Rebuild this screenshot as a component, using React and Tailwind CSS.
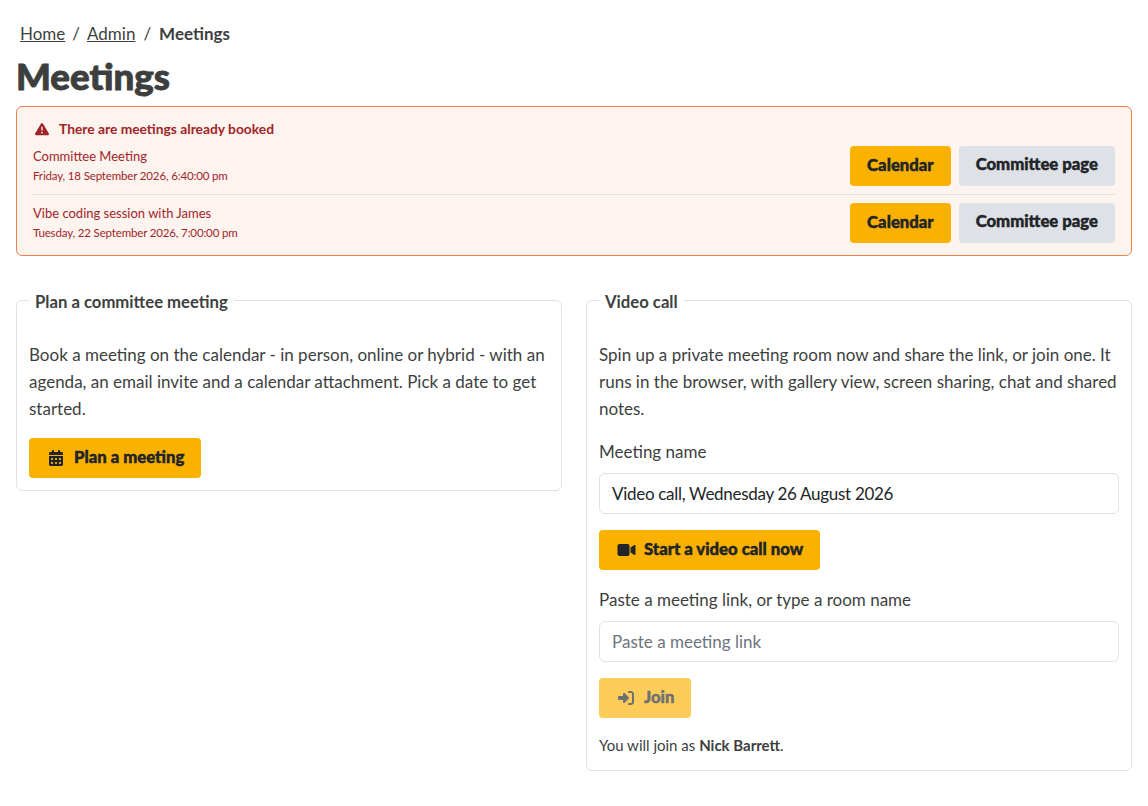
import React from "react";
import { FaCalendarDays, FaVideo, FaRightToBracket, FaTriangleExclamation } from "react-icons/fa6";

const body = "font-['Lato','Noto_Sans',sans-serif]";
const head = "font-['Lato','Roboto',sans-serif] font-black";
const stroke = "[-webkit-text-stroke:0.45px_currentColor]";

function Btn({ children, className = "" }) {
  return (
    <span className={`${head} ${stroke} inline-flex h-10 items-center rounded-[4px] bg-[#fbb100] px-[17px] text-[16.7px] text-[#212529] ${className}`}>
      {children}
    </span>
  );
}

function Icon({ children }) {
  return <span className="flex w-5 justify-center">{children}</span>;
}

function Booking({ title, when }) {
  return (
    <div className="flex items-start justify-between">
      <div>
        <div className="text-[13px] leading-[20px]">{title}</div>
        <div className="mt-px text-[11.5px] leading-[18px] tracking-[-0.15px]">{when}</div>
      </div>
      <div className="flex gap-2">
        <Btn>Calendar</Btn>
        <span className={`${head} ${stroke} inline-flex h-10 items-start rounded-[4px] bg-[#dee2e6] px-[17px] pt-[6px] text-[16.7px] text-[#212529]`}>
          Committee page
        </span>
      </div>
    </div>
  );
}

function Panel({ title, children }) {
  return (
    <fieldset className="rounded-[6px] border border-[#dee2e6] px-3 pb-3 pt-0">
      <legend className="ml-0 px-[6px] pt-[4px] text-[16.7px] font-bold leading-[20px] text-[#3d3f3f]">{title}</legend>
      {children}
    </fieldset>
  );
}

export default function App() {
  return (
    <div className={`${body} min-h-[806px] bg-white px-4 text-[#3d3f3f]`}>
      <nav className="flex items-center pl-1 pt-[21px] text-[17px] leading-[26px]">
        <a className="underline">Home</a>
        <span className="px-[7px]">/</span>
        <a className="underline">Admin</a>
        <span className="px-[8px]">/</span>
        <strong className="font-bold">Meetings</strong>
      </nav>
      <h1 className={`${head} mt-[7px] text-[36.7px] leading-[44px] [-webkit-text-stroke:0.9px_currentColor]`}>Meetings</h1>
      <div className="mt-[8px] rounded-[6px] border border-[#f0804f] bg-[#fdf3ef] px-4 pb-3 pt-[12px] text-[#a02527]">
        <div className="flex h-[20px] items-center gap-[9px] pl-[1px] text-[13.8px] font-bold">
          <FaTriangleExclamation className="h-[14px] w-[16px]" />
          <span>There are meetings already booked</span>
        </div>
        <div className="mt-[7px]">
          <Booking title="Committee Meeting" when="Friday, 18 September 2026, 6:40:00 pm" />
          <div className="my-2 h-px bg-[#dfe3e8]" />
          <Booking title="Vibe coding session with James" when="Tuesday, 22 September 2026, 7:00:00 pm" />
        </div>
      </div>
      <div className="mt-[32px] grid grid-cols-2 items-start gap-6">
        <Panel title="Plan a committee meeting">
          <p className="mt-[29px] text-[17px] leading-[27px]">
            Book a meeting on the calendar - in person, online or hybrid - with an agenda, an email invite and a calendar attachment. Pick a date to get started.
          </p>
          <Btn className="mt-[16px] gap-2">
            <Icon><FaCalendarDays className="h-4 w-[14px]" /></Icon>
            Plan a meeting
          </Btn>
        </Panel>
        <Panel title="Video call">
          <p className="mt-[29px] text-[17px] leading-[27px]">
            Spin up a private meeting room now and share the link, or join one. It runs in the browser, with gallery view, screen sharing, chat and shared notes.
          </p>
          <div className="mt-[16px] text-[17px] leading-[27px]">Meeting name</div>
          <div className="mt-[8px] flex h-[41px] items-center rounded-[6px] border border-[#dee2e6] px-3 text-[17px] tracking-[-0.3px] text-[#212529]">
            Video call, Wednesday 26 August 2026
          </div>
          <div className="mt-4">
            <Btn className="gap-2">
              <Icon><FaVideo className="h-4 w-[19px]" /></Icon>
              Start a video call now
            </Btn>
          </div>
          <div className="mt-[16px] text-[17px] leading-[27px]">Paste a meeting link, or type a room name</div>
          <div className="mt-[8px] flex h-[41px] items-center rounded-[6px] border border-[#dee2e6] px-3 text-[17px] text-[#6c757d]">
            Paste a meeting link
          </div>
          <div className="mt-4">
            <Btn className="gap-2 opacity-65">
              <Icon><FaRightToBracket className="h-4 w-4" /></Icon>
              Join
            </Btn>
          </div>
          <p className="mb-[2px] mt-[17px] text-[15px] leading-[21px]">
            You will join as <strong className="font-bold">Nick Barrett</strong>.
          </p>
        </Panel>
      </div>
    </div>
  );
}
